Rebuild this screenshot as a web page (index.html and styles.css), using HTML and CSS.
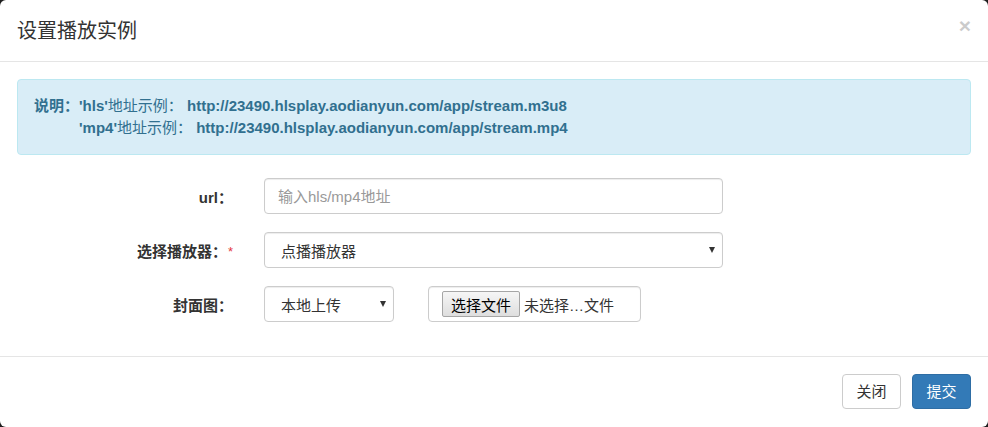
FILE: index.html
```html
<!DOCTYPE html>
<html lang="zh-CN">
<head>
<meta charset="utf-8">
<title>设置播放实例</title>
<link rel="stylesheet" href="styles.css">
</head>
<body>
<div class="modal">
  <div class="modal-header">
    <h4 class="modal-title">设置播放实例</h4>
    <button class="close" type="button">×</button>
  </div>
  <div class="modal-body">
    <div class="alert">
      <b class="alert-lead">说明：</b>
      <div class="alert-lines">
        <p><b>'hls'</b>地址示例： <b>http://23490.hlsplay.aodianyun.com/app/stream.m3u8</b></p>
        <p><b>'mp4'</b>地址示例： <b>http://23490.hlsplay.aodianyun.com/app/stream.mp4</b></p>
      </div>
    </div>
    <form class="form">
      <div class="form-row">
        <label class="form-label">url：</label>
        <input class="form-control wide" type="text" placeholder="输入hls/mp4地址">
      </div>
      <div class="form-row">
        <label class="form-label">选择播放器：<span class="req">*</span></label>
        <div class="select-box wide"><span class="select-text">点播播放器</span><span class="caret"></span></div>
      </div>
      <div class="form-row">
        <label class="form-label">封面图：</label>
        <div class="select-box narrow"><span class="select-text">本地上传</span><span class="caret"></span></div>
        <div class="file-box"><span class="file-btn">选择文件</span><span class="file-name">未选择…文件</span></div>
      </div>
    </form>
  </div>
  <div class="modal-footer">
    <button class="btn btn-default" type="button">关闭</button>
    <button class="btn btn-primary" type="button">提交</button>
  </div>
</div>
</body>
</html>
```

FILE: styles.css
```css
* { box-sizing: border-box; }
html, body {
  margin: 0;
  padding: 0;
  background: #1e1e1e;
}
body {
  font-family: "Liberation Sans", "Noto Sans CJK SC", sans-serif;
  font-size: 15px;
  color: #333;
}
.modal {
  width: 988px;
  height: 427px;
  background: #fff;
  border-radius: 6px;
  overflow: hidden;
}
.modal-header {
  display: flex;
  justify-content: space-between;
  align-items: flex-start;
  padding: 16px 17px 15px 17px;
  border-bottom: 1px solid #e5e5e5;
}
.modal-title {
  margin: 0;
  font-size: 20px;
  font-weight: normal;
  line-height: 30px;
  color: #333;
}
.close {
  border: 0;
  background: none;
  padding: 0;
  margin-top: -1px;
  font-family: "Liberation Sans", sans-serif;
  font-size: 21px;
  font-weight: bold;
  line-height: 21px;
  color: #000;
  opacity: 0.2;
}
.modal-body {
  padding: 17px 17px 34px 17px;
}
.alert {
  display: flex;
  padding: 15px;
  border: 1px solid #bce8f1;
  border-radius: 4px;
  background: #d9edf7;
  color: #31708f;
  line-height: 22px;
  margin-bottom: 23px;
}
.alert-lead { padding-left: 1px; }
.alert-lines p { margin: 0; }
.form {
  display: flex;
  flex-direction: column;
  gap: 18px;
}
.form-row {
  display: flex;
  align-items: center;
  height: 36px;
}
.form-label {
  width: 216px;
  margin-right: 31px;
  text-align: right;
  font-weight: bold;
  color: #333;
}
.req {
  color: #e4393c;
  font-weight: normal;
  font-size: 13px;
  margin-left: 1px;
  vertical-align: 1px;
}
.form-control {
  height: 36px;
  padding: 6px 13px;
  border: 1px solid #ccc;
  border-radius: 4px;
  font: inherit;
  color: #555;
  box-shadow: inset 0 1px 1px rgba(0,0,0,.075);
  outline: none;
}
.form-control::placeholder { color: #999; }
.wide { width: 459px; }
.narrow { width: 130px; }
.select-box {
  display: flex;
  align-items: center;
  justify-content: space-between;
  height: 36px;
  padding: 0 7px 0 16px;
  border: 1px solid #ccc;
  border-radius: 4px;
  color: #333;
  box-shadow: inset 0 1px 1px rgba(0,0,0,.075);
}
.caret {
  width: 0;
  height: 0;
  border-left: 3.5px solid transparent;
  border-right: 3.5px solid transparent;
  border-top: 6px solid #333;
}
.file-box {
  display: flex;
  align-items: center;
  width: 213px;
  height: 36px;
  margin-left: 34px;
  padding: 0 13px;
  border: 1px solid #ccc;
  border-radius: 4px;
  box-shadow: inset 0 1px 1px rgba(0,0,0,.075);
}
.file-btn {
  display: inline-flex;
  align-items: center;
  height: 26px;
  padding: 0 8px;
  border: 1px solid #a6a6a6;
  border-radius: 2px;
  background: linear-gradient(#f6f6f6, #dedede);
  color: #000;
}
.file-name {
  margin-left: 4px;
  color: #333;
}
.modal-footer {
  display: flex;
  justify-content: flex-end;
  gap: 11px;
  padding: 17px 17px 18px 17px;
  border-top: 1px solid #e5e5e5;
}
.btn {
  height: 35px;
  width: 59px;
  padding: 0;
  border: 1px solid #ccc;
  border-radius: 4px;
  font: inherit;
  line-height: 33px;
  text-align: center;
  cursor: pointer;
}
.btn-default { background: #fff; color: #333; }
.btn-primary { background: #337ab7; border-color: #2e6da4; color: #fff; }
```
